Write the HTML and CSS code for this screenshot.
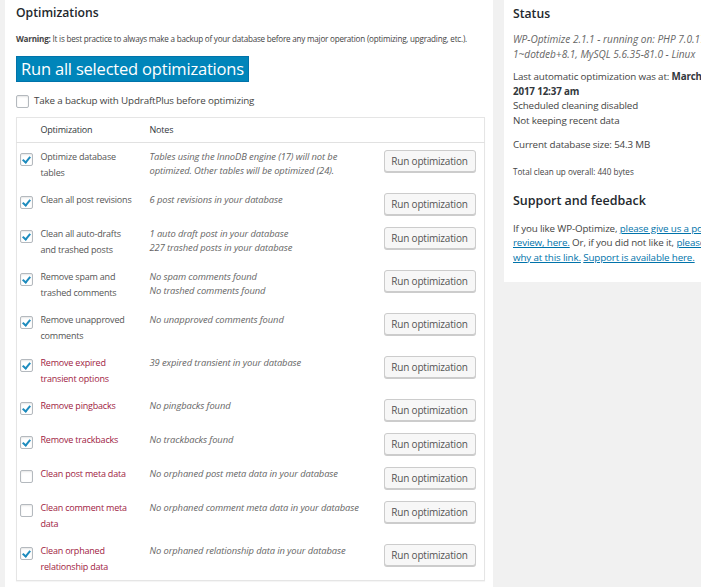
FILE: index.html
```html
<!DOCTYPE html>
<html>
<head>
<meta charset="utf-8">
<link rel="stylesheet" href="styles.css">
</head>
<body>
<div class="wrap">
  <section class="panel main">
    <h2 class="title">Optimizations</h2>
    <p class="warning"><b>Warning:</b> It is best practice to always make a backup of your database before any major operation (optimizing, upgrading, etc.).</p>
    <button class="primary">Run all selected optimizations</button>
    <label class="backup"><span class="cb"></span>Take a backup with UpdraftPlus before optimizing</label>
    <table class="opts">
      <thead>
        <tr><th class="c-cb"></th><th class="c-name">Optimization</th><th class="c-notes">Notes</th><th class="c-btn"></th></tr>
      </thead>
      <tbody>
        <tr><td class="c-cb"><span class="cb on"></span></td><td class="c-name">Optimize database tables</td><td class="c-notes">Tables using the InnoDB engine (17) will not be optimized. Other tables will be optimized (24).</td><td class="c-btn"><button class="run">Run optimization</button></td></tr>
        <tr><td class="c-cb"><span class="cb on"></span></td><td class="c-name">Clean all post revisions</td><td class="c-notes">6 post revisions in your database</td><td class="c-btn"><button class="run">Run optimization</button></td></tr>
        <tr><td class="c-cb"><span class="cb on"></span></td><td class="c-name">Clean all auto-drafts and trashed posts</td><td class="c-notes">1 auto draft post in your database<br>227 trashed posts in your database</td><td class="c-btn"><button class="run">Run optimization</button></td></tr>
        <tr><td class="c-cb"><span class="cb on"></span></td><td class="c-name">Remove spam and trashed comments</td><td class="c-notes">No spam comments found<br>No trashed comments found</td><td class="c-btn"><button class="run">Run optimization</button></td></tr>
        <tr><td class="c-cb"><span class="cb on"></span></td><td class="c-name">Remove unapproved comments</td><td class="c-notes">No unapproved comments found</td><td class="c-btn"><button class="run">Run optimization</button></td></tr>
        <tr class="risky"><td class="c-cb"><span class="cb on"></span></td><td class="c-name">Remove expired transient options</td><td class="c-notes">39 expired transient in your database</td><td class="c-btn"><button class="run">Run optimization</button></td></tr>
        <tr class="risky"><td class="c-cb"><span class="cb on"></span></td><td class="c-name">Remove pingbacks</td><td class="c-notes">No pingbacks found</td><td class="c-btn"><button class="run">Run optimization</button></td></tr>
        <tr class="risky"><td class="c-cb"><span class="cb on"></span></td><td class="c-name">Remove trackbacks</td><td class="c-notes">No trackbacks found</td><td class="c-btn"><button class="run">Run optimization</button></td></tr>
        <tr class="risky"><td class="c-cb"><span class="cb"></span></td><td class="c-name">Clean post meta data</td><td class="c-notes">No orphaned post meta data in your database</td><td class="c-btn"><button class="run">Run optimization</button></td></tr>
        <tr class="risky"><td class="c-cb"><span class="cb"></span></td><td class="c-name">Clean comment meta data</td><td class="c-notes">No orphaned comment meta data in your database</td><td class="c-btn"><button class="run">Run optimization</button></td></tr>
        <tr class="risky"><td class="c-cb"><span class="cb on"></span></td><td class="c-name">Clean orphaned relationship data</td><td class="c-notes">No orphaned relationship data in your database</td><td class="c-btn"><button class="run">Run optimization</button></td></tr>
      </tbody>
    </table>
  </section>
  <aside class="panel side">
    <h2 class="title">Status</h2>
    <p class="version">WP-Optimize 2.1.1 - running on: PHP 7.0.17-<br>1~dotdeb+8.1, MySQL 5.6.35-81.0 - Linux</p>
    <p class="status">Last automatic optimization was at: <b>March 22,<br>2017 12:37 am</b><br>Scheduled cleaning disabled<br>Not keeping recent data</p>
    <p class="status size">Current database size: 54.3 MB</p>
    <p class="total">Total clean up overall: 440 bytes</p>
    <h2 class="title support">Support and feedback</h2>
    <p class="status feedback">If you like WP-Optimize, <a href="#">please give us a positive<br>review, here.</a> Or, if you did not like it, <a href="#">please tell us<br>why at this link.</a> <a href="#">Support is available here.</a></p>
  </aside>
</div>
</body>
</html>
```
FILE: styles.css
```css
* { box-sizing: border-box; }
html, body { margin: 0; padding: 0; }
body {
  background: #f1f1f1;
  font-family: "Open Sans", "Noto Sans", sans-serif;
  color: #444;
  overflow: hidden;
  height: 587px;
}
.wrap {
  display: grid;
  grid-template-columns: 488px 260px;
  column-gap: 11px;
  padding-left: 5px;
  align-items: start;
}
.panel { background: #fff; }
.main {
  padding: 1px 8px 20px 11px;
  min-height: 600px;
}
.title {
  font-size: 12.2px;
  font-weight: 600;
  color: #23282d;
  margin: 3px 0 0;
  line-height: 18px;
}
.warning {
  font-size: 8.1px;
  letter-spacing: -0.22px;
  margin: 10px 0 0;
  line-height: 14px;
  color: #444;
  white-space: nowrap;
}
.warning b { font-weight: 700; }
.primary {
  display: block;
  margin-top: 10px;
  height: 26px;
  padding: 0 4px;
  background: #0085ba;
  border: 1px solid #0073aa;
  color: #fff;
  font-family: inherit;
  font-size: 16.5px;
  line-height: 22px;
  border-radius: 0;
  letter-spacing: -0.2px;
}
.backup {
  display: flex;
  align-items: center;
  gap: 5px;
  margin-top: 12px;
  font-size: 9.8px;
  letter-spacing: -0.15px;
  line-height: 14px;
  color: #444;
}
.cb {
  display: inline-block;
  width: 13px;
  height: 13px;
  border: 1px solid #b4b9be;
  border-radius: 2px;
  background: #fff;
  box-shadow: inset 0 1px 2px rgba(0,0,0,.1);
  position: relative;
  flex: none;
}
.cb.on::after {
  content: "";
  position: absolute;
  left: 3px;
  top: 1px;
  width: 3px;
  height: 6px;
  border: solid #1e8cbe;
  border-width: 0 2px 2px 0;
  transform: rotate(40deg);
}
.opts {
  margin-top: 9px;
  width: 469px;
  border: 1px solid #e5e5e5;
  border-collapse: collapse;
  box-shadow: 0 1px 1px rgba(0,0,0,.04);
}
.opts th {
  font-weight: 400;
  font-size: 9px;
  letter-spacing: -0.2px;
  text-align: left;
  color: #32373c;
  height: 25px;
  padding: 0;
  border-bottom: 1px solid #e1e1e1;
}
.opts td {
  vertical-align: top;
  padding: 6px 0 5px;
}
.c-cb { width: 24px; padding-left: 3px !important; }
.opts td.c-cb .cb { margin-top: 3px; }
.c-name {
  width: 109px;
  padding-right: 14px !important;
  font-size: 9px;
  letter-spacing: -0.2px;
  line-height: 16px;
  color: #555;
}
.opts th.c-name { color: #32373c; }
.risky .c-name { color: #a0223f; }
.c-notes {
  width: 234px;
  padding-right: 12px !important;
  font-size: 9.4px;
  letter-spacing: -0.1px;
  font-style: italic;
  line-height: 14px;
  color: #666;
}
.opts th.c-notes { font-style: normal; font-size: 9px; letter-spacing: -0.2px; color: #32373c; }
.opts td.c-notes { padding-top: 7px; }
.c-btn { padding-right: 8px !important; }
.opts td.c-btn { padding-top: 7px; }
.run {
  display: block;
  width: 92px;
  height: 22px;
  padding: 0;
  background: #f7f7f7;
  border: 1px solid #ccc;
  border-radius: 3px;
  box-shadow: 0 1px 0 #ccc;
  color: #555;
  font-family: inherit;
  font-size: 10px;
  letter-spacing: -0.2px;
  line-height: 20px;
}
.side {
  padding: 2px 9px 12px;
  height: 282px;
  white-space: nowrap;
}
.side p { margin: 0; }
.version {
  margin-top: 9px !important;
  font-size: 10.1px;
  line-height: 15px;
  font-style: italic;
  color: #666;
}
.status {
  margin-top: 8px !important;
  font-size: 9.8px;
  letter-spacing: -0.15px;
  line-height: 14.5px;
  color: #444;
}
.status.size { margin-top: 10px !important; }
.status.feedback { margin-top: 12px !important; }
.status b { font-weight: 700; color: #32373c; }
.total {
  margin-top: 13px !important;
  font-size: 8.1px;
  line-height: 12px;
  color: #444;
}
.support { font-size: 12.5px; margin-top: 14px; }
.side a { color: #0073aa; text-decoration: underline; }
```
